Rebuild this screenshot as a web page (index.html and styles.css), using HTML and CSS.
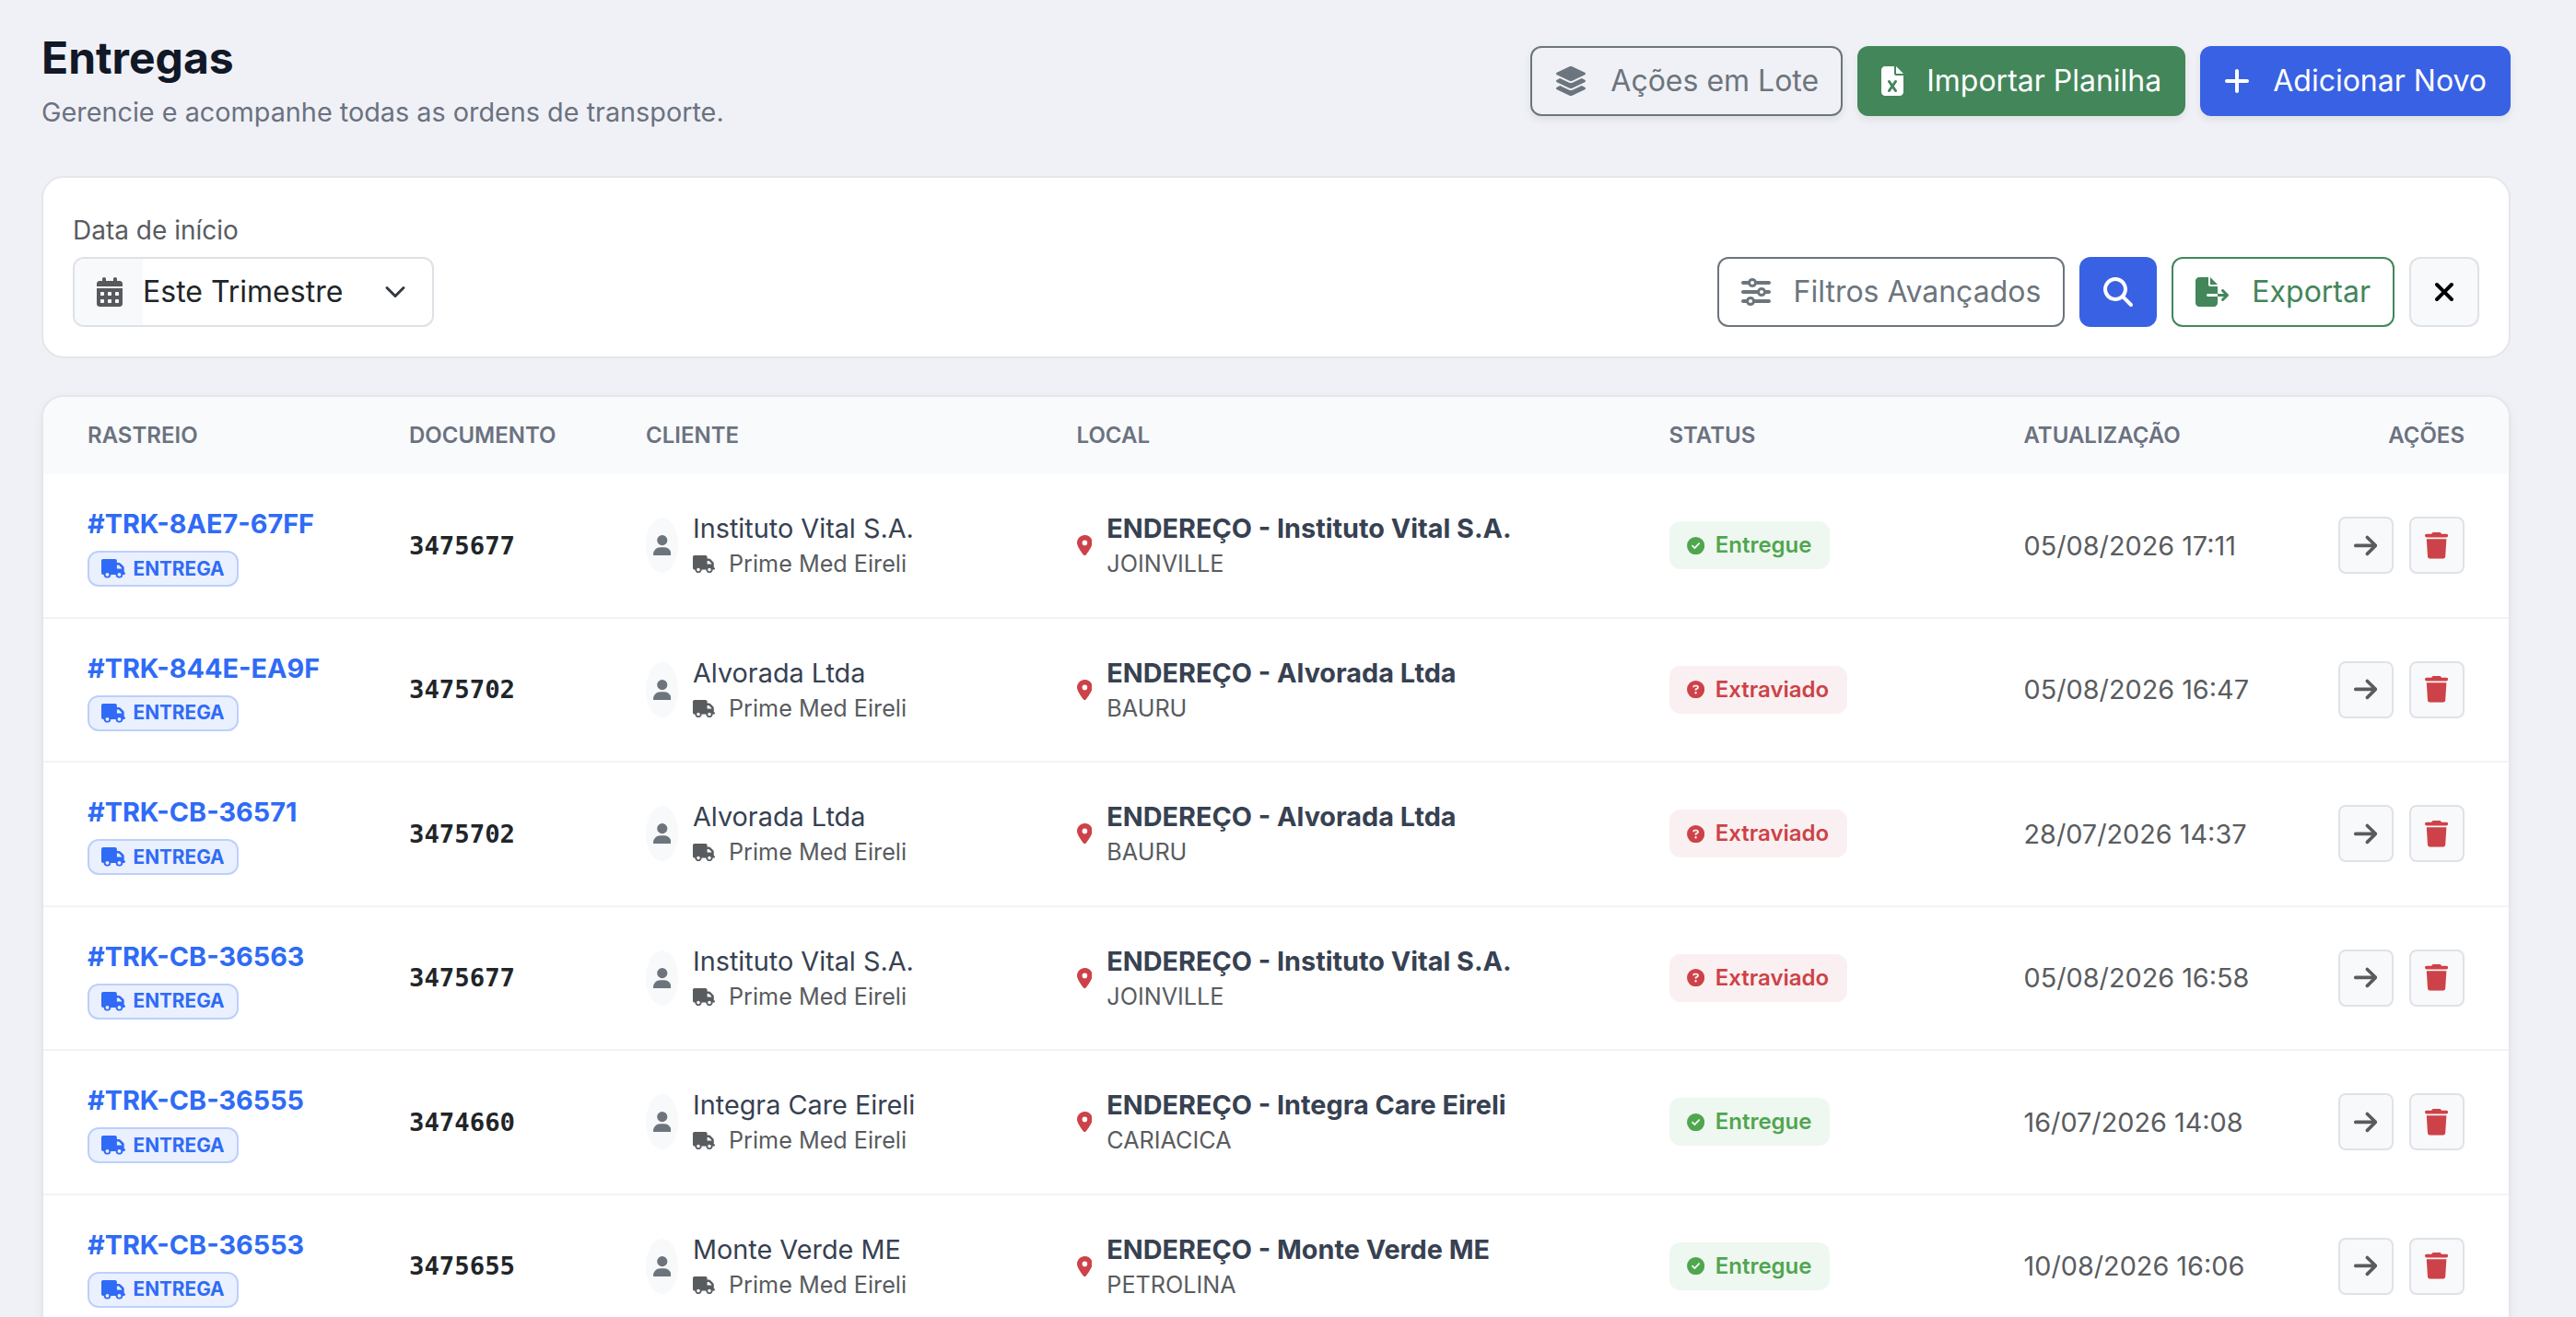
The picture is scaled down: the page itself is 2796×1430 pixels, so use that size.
FILE: index.html
```html
<!DOCTYPE html>
<html lang="pt-BR">
<head>
<meta charset="utf-8">
<title>Entregas</title>
<link rel="stylesheet" href="styles.css">
</head>
<body>
<svg class="sprite" width="0" height="0" aria-hidden="true">
<symbol id="i-layers" viewBox="0 0 576 512"><path d="M264.5 5.2c14.9-6.9 32.1-6.9 47 0l218.6 101c8.5 3.9 13.9 12.4 13.9 21.8s-5.4 17.9-13.9 21.8l-218.6 101c-14.9 6.9-32.1 6.9-47 0L45.9 149.8C37.4 145.8 32 137.3 32 128s5.4-17.9 13.9-21.8L264.5 5.2zM476.9 209.6l53.2 24.6c8.5 3.9 13.9 12.4 13.9 21.8s-5.4 17.9-13.9 21.8l-218.6 101c-14.9 6.9-32.1 6.9-47 0L45.9 277.8C37.4 273.8 32 265.3 32 256s5.4-17.9 13.9-21.8l53.2-24.6 152 70.2c23.4 10.8 50.4 10.8 73.8 0l152-70.2zm-152 198.2l152-70.2 53.2 24.6c8.5 3.9 13.9 12.4 13.9 21.8s-5.4 17.9-13.9 21.8l-218.6 101c-14.9 6.9-32.1 6.9-47 0L45.9 405.8C37.4 401.8 32 393.3 32 384s5.4-17.9 13.9-21.8l53.2-24.6 152 70.2c23.4 10.8 50.4 10.8 73.8 0z"/></symbol>
<symbol id="i-excel" viewBox="0 0 384 512"><path d="M64 0C28.7 0 0 28.7 0 64V448c0 35.3 28.7 64 64 64H320c35.3 0 64-28.7 64-64V160H256c-17.7 0-32-14.3-32-32V0H64zM256 0V128H384L256 0zM155.7 250.2L192 302.1l36.3-51.9c7.6-10.9 22.6-13.5 33.4-5.9s13.5 22.6 5.9 33.4L221.3 344l46.4 66.2c7.6 10.9 5 25.8-5.9 33.4s-25.8 5-33.4-5.9L192 385.8l-36.3 51.9c-7.6 10.9-22.6 13.5-33.4 5.9s-13.5-22.6-5.9-33.4L162.7 344l-46.4-66.2c-7.6-10.9-5-25.8 5.9-33.4s25.8-5 33.4 5.9z"/></symbol>
<symbol id="i-plus" viewBox="0 0 448 512"><path d="M256 80c0-17.7-14.3-32-32-32s-32 14.3-32 32V224H48c-17.7 0-32 14.3-32 32s14.3 32 32 32H192V432c0 17.7 14.3 32 32 32s32-14.3 32-32V288H400c17.7 0 32-14.3 32-32s-14.3-32-32-32H256V80z"/></symbol>
<symbol id="i-calendar" viewBox="0 0 448 512"><path d="M128 0c17.7 0 32 14.3 32 32V64H288V32c0-17.7 14.3-32 32-32s32 14.3 32 32V64h48c26.5 0 48 21.5 48 48v48H0V112C0 85.5 21.5 64 48 64H96V32c0-17.7 14.3-32 32-32zM0 192H448V464c0 26.5-21.5 48-48 48H48c-26.5 0-48-21.5-48-48V192zm64 80v32c0 8.8 7.2 16 16 16h32c8.8 0 16-7.2 16-16V272c0-8.8-7.2-16-16-16H80c-8.8 0-16 7.2-16 16zm128 0v32c0 8.8 7.2 16 16 16h32c8.8 0 16-7.2 16-16V272c0-8.8-7.2-16-16-16H208c-8.8 0-16 7.2-16 16zm144-16c-8.8 0-16 7.2-16 16v32c0 8.8 7.2 16 16 16h32c8.8 0 16-7.2 16-16V272c0-8.8-7.2-16-16-16H336zM64 400v32c0 8.8 7.2 16 16 16h32c8.8 0 16-7.2 16-16V400c0-8.8-7.2-16-16-16H80c-8.8 0-16 7.2-16 16zm144-16c-8.8 0-16 7.2-16 16v32c0 8.8 7.2 16 16 16h32c8.8 0 16-7.2 16-16V400c0-8.8-7.2-16-16-16H208zm112 16v32c0 8.8 7.2 16 16 16h32c8.8 0 16-7.2 16-16V400c0-8.8-7.2-16-16-16H336c-8.8 0-16 7.2-16 16z"/></symbol>
<symbol id="i-chevron" viewBox="0 0 16 16"><path fill="none" stroke="#343a40" stroke-linecap="round" stroke-linejoin="round" stroke-width="2" d="m2 5 6 6 6-6"/></symbol>
<symbol id="i-sliders" viewBox="0 0 512 512"><path d="M0 416c0 17.7 14.3 32 32 32l54.7 0c12.3 28.3 40.5 48 73.3 48s61-19.7 73.3-48L480 448c17.7 0 32-14.3 32-32s-14.3-32-32-32l-246.7 0c-12.3-28.3-40.5-48-73.3-48s-61 19.7-73.3 48L32 384c-17.7 0-32 14.3-32 32zm128 0a32 32 0 1 1 64 0 32 32 0 1 1 -64 0zM320 256a32 32 0 1 1 64 0 32 32 0 1 1 -64 0zm32-80c-32.8 0-61 19.7-73.3 48L32 224c-17.7 0-32 14.3-32 32s14.3 32 32 32l246.7 0c12.3 28.3 40.5 48 73.3 48s61-19.7 73.3-48l54.7 0c17.7 0 32-14.3 32-32s-14.3-32-32-32l-54.7 0c-12.3-28.3-40.5-48-73.3-48zM192 128a32 32 0 1 1 0-64 32 32 0 1 1 0 64zm73.3-64C253 35.7 224.8 16 192 16s-61 19.7-73.3 48L32 64C14.3 64 0 78.3 0 96s14.3 32 32 32l86.7 0c12.3 28.3 40.5 48 73.3 48s61-19.7 73.3-48L480 128c17.7 0 32-14.3 32-32s-14.3-32-32-32L265.3 64z"/></symbol>
<symbol id="i-search" viewBox="0 0 512 512"><path d="M416 208c0 45.9-14.9 88.3-40 122.7L502.6 457.4c12.5 12.5 12.5 32.8 0 45.3s-32.8 12.5-45.3 0L330.7 376c-34.4 25.2-76.8 40-122.7 40C93.1 416 0 322.9 0 208S93.1 0 208 0S416 93.1 416 208zM208 352a144 144 0 1 0 0-288 144 144 0 1 0 0 288z"/></symbol>
<symbol id="i-export" viewBox="0 0 576 512"><path d="M0 64C0 28.7 28.7 0 64 0H224V128c0 17.7 14.3 32 32 32H384V288H216c-13.3 0-24 10.7-24 24s10.7 24 24 24H384V448c0 35.3-28.7 64-64 64H64c-35.3 0-64-28.7-64-64V64zM384 336V288H494.1l-39-39c-9.4-9.4-9.4-24.6 0-33.9s24.6-9.4 33.9 0l80 80c9.4 9.4 9.4 24.6 0 33.9l-80 80c-9.4 9.4-24.6 9.4-33.9 0s-9.4-24.6 0-33.9l39-39H384zm0-208H256V0L384 128z"/></symbol>
<symbol id="i-xmark" viewBox="0 0 384 512"><path d="M342.6 150.6c12.5-12.5 12.5-32.8 0-45.3s-32.8-12.5-45.3 0L192 210.7 86.6 105.4c-12.5-12.5-32.8-12.5-45.3 0s-12.5 32.8 0 45.3L146.7 256 41.4 361.4c-12.5 12.5-12.5 32.8 0 45.3s32.8 12.5 45.3 0L192 301.3 297.4 406.6c12.5 12.5 32.8 12.5 45.3 0s12.5-32.8 0-45.3L237.3 256 342.6 150.6z"/></symbol>
<symbol id="i-truck" viewBox="0 0 640 512"><path d="M48 0C21.5 0 0 21.5 0 48V368c0 26.5 21.5 48 48 48H64c0 53 43 96 96 96s96-43 96-96H384c0 53 43 96 96 96s96-43 96-96h32c17.7 0 32-14.3 32-32s-14.3-32-32-32V288 256 237.3c0-17-6.7-33.3-18.7-45.3L512 114.7c-12-12-28.3-18.7-45.3-18.7H416V48c0-26.5-21.5-48-48-48H48zM416 160h50.7L544 237.3V256H416V160zM112 416a48 48 0 1 1 96 0 48 48 0 1 1 -96 0zm368-48a48 48 0 1 1 0 96 48 48 0 1 1 0-96z"/></symbol>
<symbol id="i-user" viewBox="0 0 448 512"><path d="M224 256A128 128 0 1 0 224 0a128 128 0 1 0 0 256zm-45.7 48C79.8 304 0 383.8 0 482.3C0 498.7 13.3 512 29.7 512H418.3c16.4 0 29.7-13.3 29.7-29.7C448 383.8 368.2 304 269.7 304H178.3z"/></symbol>
<symbol id="i-pin" viewBox="0 0 384 512"><path d="M215.7 499.2C267 435 384 279.4 384 192C384 86 298 0 192 0S0 86 0 192c0 87.4 117 243 168.3 307.2c12.3 15.3 35.1 15.3 47.4 0zM192 128a64 64 0 1 1 0 128 64 64 0 1 1 0-128z"/></symbol>
<symbol id="i-check" viewBox="0 0 512 512"><path d="M256 512A256 256 0 1 0 256 0a256 256 0 1 0 0 512zM369 209L241 337c-9.4 9.4-24.6 9.4-33.9 0l-64-64c-9.4-9.4-9.4-24.6 0-33.9s24.6-9.4 33.9 0l47 47L335 175c9.4-9.4 24.6-9.4 33.9 0s9.4 24.6 0 33.9z"/></symbol>
<symbol id="i-question" viewBox="0 0 512 512"><path d="M256 512A256 256 0 1 0 256 0a256 256 0 1 0 0 512zM169.8 165.3c7.9-22.3 29.1-37.3 52.8-37.3h58.3c34.9 0 63.1 28.3 63.1 63.1c0 22.6-12.1 43.5-31.7 54.8L280 264.4c-.2 13-10.9 23.6-24 23.6c-13.3 0-24-10.7-24-24V250.5c0-8.6 4.6-16.5 12.1-20.8l44.3-25.4c4.7-2.7 7.6-7.7 7.6-13.1c0-8.4-6.8-15.1-15.1-15.1H222.6c-3.4 0-6.4 2.1-7.5 5.3l-.4 1.2c-4.4 12.5-18.2 19-30.6 14.6s-19-18.2-14.6-30.6l.4-1.2zM224 352a32 32 0 1 1 64 0 32 32 0 1 1 -64 0z"/></symbol>
<symbol id="i-arrow" viewBox="0 0 448 512"><path d="M438.6 278.6c12.5-12.5 12.5-32.8 0-45.3l-160-160c-12.5-12.5-32.8-12.5-45.3 0s-12.5 32.8 0 45.3L338.8 224 32 224c-17.7 0-32 14.3-32 32s14.3 32 32 32l306.7 0L233.4 393.4c-12.5 12.5-12.5 32.8 0 45.3s32.8 12.5 45.3 0l160-160z"/></symbol>
<symbol id="i-trash" viewBox="0 0 448 512"><path d="M135.2 17.7L128 32H32C14.3 32 0 46.3 0 64S14.3 96 32 96H416c17.7 0 32-14.3 32-32s-14.3-32-32-32H320l-7.2-14.3C307.4 6.8 296.3 0 284.2 0H163.8c-12.1 0-23.2 6.8-28.6 17.7zM416 128H32L53.2 467c1.6 25.3 22.6 45 47.9 45H346.9c25.3 0 46.3-19.7 47.9-45L416 128z"/></symbol>
</svg>
<main class="page">
<header class="page-head">
<div>
<h1 class="title">Entregas</h1>
<p class="subtitle">Gerencie e acompanhe todas as ordens de transporte.</p>
</div>
<div class="actions">
<button class="btn btn-outline raised"><svg class="w36"><use href="#i-layers"/></svg><span>Ações em Lote</span></button>
<button class="btn btn-green raised"><svg class="w24"><use href="#i-excel"/></svg><span>Importar Planilha</span></button>
<button class="btn btn-blue raised"><svg class="w28"><use href="#i-plus"/></svg><span>Adicionar Novo</span></button>
</div>
</header>
<section class="filters">
<div class="field">
<label class="label">Data de início</label>
<div class="select"><span class="select-icon"><svg class="w28"><use href="#i-calendar"/></svg></span><span class="select-value">Este Trimestre</span><svg class="chevron"><use href="#i-chevron"/></svg></div>
</div>
<div class="actions">
<button class="btn btn-outline"><svg class="w32"><use href="#i-sliders"/></svg><span>Filtros Avançados</span></button>
<button class="btn btn-blue"><svg class="w32"><use href="#i-search"/></svg></button>
<button class="btn btn-outline-green"><svg class="w36"><use href="#i-export"/></svg><span>Exportar</span></button>
<button class="btn btn-light"><svg class="w24"><use href="#i-xmark"/></svg></button>
</div>
</section>
<section class="table">
<div class="row thead"><div>RASTREIO</div><div>DOCUMENTO</div><div>CLIENTE</div><div>LOCAL</div><div>STATUS</div><div>ATUALIZAÇÃO</div><div class="right">AÇÕES</div></div>

<div class="row">
<div class="track"><a class="code">#TRK-8AE7-67FF</a><span class="tag"><svg><use href="#i-truck"/></svg>ENTREGA</span></div>
<div class="doc">3475677</div>
<div class="client"><span class="avatar"><svg><use href="#i-user"/></svg></span><div class="stack"><span class="name">Instituto Vital S.A.</span><span class="sub"><svg><use href="#i-truck"/></svg>Prime Med Eireli</span></div></div>
<div class="place"><svg><use href="#i-pin"/></svg><div class="stack"><b class="name">ENDEREÇO - Instituto Vital S.A.</b><span class="sub">JOINVILLE</span></div></div>
<div><span class="status ok"><svg><use href="#i-check"/></svg>Entregue</span></div>
<div class="date">05/08/2026 17:11</div>
<div class="tools"><button class="tool"><svg><use href="#i-arrow"/></svg></button><button class="tool danger"><svg><use href="#i-trash"/></svg></button></div>
</div>

<div class="row">
<div class="track"><a class="code">#TRK-844E-EA9F</a><span class="tag"><svg><use href="#i-truck"/></svg>ENTREGA</span></div>
<div class="doc">3475702</div>
<div class="client"><span class="avatar"><svg><use href="#i-user"/></svg></span><div class="stack"><span class="name">Alvorada Ltda</span><span class="sub"><svg><use href="#i-truck"/></svg>Prime Med Eireli</span></div></div>
<div class="place"><svg><use href="#i-pin"/></svg><div class="stack"><b class="name">ENDEREÇO - Alvorada Ltda</b><span class="sub">BAURU</span></div></div>
<div><span class="status lost"><svg><use href="#i-question"/></svg>Extraviado</span></div>
<div class="date">05/08/2026 16:47</div>
<div class="tools"><button class="tool"><svg><use href="#i-arrow"/></svg></button><button class="tool danger"><svg><use href="#i-trash"/></svg></button></div>
</div>

<div class="row">
<div class="track"><a class="code">#TRK-CB-36571</a><span class="tag"><svg><use href="#i-truck"/></svg>ENTREGA</span></div>
<div class="doc">3475702</div>
<div class="client"><span class="avatar"><svg><use href="#i-user"/></svg></span><div class="stack"><span class="name">Alvorada Ltda</span><span class="sub"><svg><use href="#i-truck"/></svg>Prime Med Eireli</span></div></div>
<div class="place"><svg><use href="#i-pin"/></svg><div class="stack"><b class="name">ENDEREÇO - Alvorada Ltda</b><span class="sub">BAURU</span></div></div>
<div><span class="status lost"><svg><use href="#i-question"/></svg>Extraviado</span></div>
<div class="date">28/07/2026 14:37</div>
<div class="tools"><button class="tool"><svg><use href="#i-arrow"/></svg></button><button class="tool danger"><svg><use href="#i-trash"/></svg></button></div>
</div>

<div class="row">
<div class="track"><a class="code">#TRK-CB-36563</a><span class="tag"><svg><use href="#i-truck"/></svg>ENTREGA</span></div>
<div class="doc">3475677</div>
<div class="client"><span class="avatar"><svg><use href="#i-user"/></svg></span><div class="stack"><span class="name">Instituto Vital S.A.</span><span class="sub"><svg><use href="#i-truck"/></svg>Prime Med Eireli</span></div></div>
<div class="place"><svg><use href="#i-pin"/></svg><div class="stack"><b class="name">ENDEREÇO - Instituto Vital S.A.</b><span class="sub">JOINVILLE</span></div></div>
<div><span class="status lost"><svg><use href="#i-question"/></svg>Extraviado</span></div>
<div class="date">05/08/2026 16:58</div>
<div class="tools"><button class="tool"><svg><use href="#i-arrow"/></svg></button><button class="tool danger"><svg><use href="#i-trash"/></svg></button></div>
</div>

<div class="row">
<div class="track"><a class="code">#TRK-CB-36555</a><span class="tag"><svg><use href="#i-truck"/></svg>ENTREGA</span></div>
<div class="doc">3474660</div>
<div class="client"><span class="avatar"><svg><use href="#i-user"/></svg></span><div class="stack"><span class="name">Integra Care Eireli</span><span class="sub"><svg><use href="#i-truck"/></svg>Prime Med Eireli</span></div></div>
<div class="place"><svg><use href="#i-pin"/></svg><div class="stack"><b class="name">ENDEREÇO - Integra Care Eireli</b><span class="sub">CARIACICA</span></div></div>
<div><span class="status ok"><svg><use href="#i-check"/></svg>Entregue</span></div>
<div class="date">16/07/2026 14:08</div>
<div class="tools"><button class="tool"><svg><use href="#i-arrow"/></svg></button><button class="tool danger"><svg><use href="#i-trash"/></svg></button></div>
</div>

<div class="row">
<div class="track"><a class="code">#TRK-CB-36553</a><span class="tag"><svg><use href="#i-truck"/></svg>ENTREGA</span></div>
<div class="doc">3475655</div>
<div class="client"><span class="avatar"><svg><use href="#i-user"/></svg></span><div class="stack"><span class="name">Monte Verde ME</span><span class="sub"><svg><use href="#i-truck"/></svg>Prime Med Eireli</span></div></div>
<div class="place"><svg><use href="#i-pin"/></svg><div class="stack"><b class="name">ENDEREÇO - Monte Verde ME</b><span class="sub">PETROLINA</span></div></div>
<div><span class="status ok"><svg><use href="#i-check"/></svg>Entregue</span></div>
<div class="date">10/08/2026 16:06</div>
<div class="tools"><button class="tool"><svg><use href="#i-arrow"/></svg></button><button class="tool danger"><svg><use href="#i-trash"/></svg></button></div>
</div>
</section>
</main>
</body>
</html>
```
FILE: styles.css
```css
* { box-sizing: border-box; }
html, body { height: 100%; }
body { margin: 0; overflow: hidden; background: #f0f1f6; font-family: Inter, "Liberation Sans", sans-serif; font-size: 28.8px; color: #212529; }
svg { fill: currentColor; display: block; flex: none; }
.sprite { position: absolute; }
.page { height: 1430px; overflow: hidden; padding: 32px 71px 0 45px; }
.page-head { display: flex; justify-content: space-between; align-items: flex-start; height: 159px; }
.title { margin: 0; font-size: 48px; line-height: 61px; font-weight: 700; color: #111827; }
.subtitle { margin: 7px 0 0; line-height: 43px; color: #6b7280; }
.actions { display: flex; gap: 16px; }
.page-head .actions { margin-top: 18px; }
.btn { display: flex; align-items: center; gap: 25px; height: 76px; padding: 0 24px; border: 2px solid transparent; border-radius: 12px; background: transparent; font: 400 32px/48px Inter, "Liberation Sans", sans-serif; white-space: nowrap; }
.btn svg { height: 32px; }
.w24 { width: 24px; } .w28 { width: 28px; } .w32 { width: 32px; } .w36 { width: 36px; }
.btn-outline { border-color: #6c757d; color: #6c757d; }
.btn-green { background: #43865a; color: #fff; }
.btn-blue { background: #3861e4; color: #fff; }
.btn-outline-green { border-color: #43865a; color: #43865a; }
.btn-light { background: #f8f9fb; border-color: #dfe2e6; color: #000; }
.raised { box-shadow: 0 4px 8px rgba(0, 0, 0, .075); }
.filters { display: flex; justify-content: space-between; align-items: flex-end; height: 198px; padding: 32px; border: 2px solid #e5e6ea; border-radius: 24px; background: #fff; }
.field { display: flex; flex-direction: column; gap: 8px; }
.label { font-size: 28px; line-height: 42px; color: #595c5f; }
.select { display: flex; align-items: center; width: 392px; height: 76px; border: 2px solid #dee2e6; border-radius: 12px; overflow: hidden; font-size: 32px; line-height: 48px; }
.select-icon { display: flex; align-items: center; width: 74px; height: 100%; padding-left: 24px; background: #f8f9fb; color: #58595c; }
.select-icon svg { height: 32px; }
.select-value { flex: 1; }
.chevron { width: 24px; height: 24px; margin-right: 28px; }
.table { margin-top: 40px; height: 1100px; border: 2px solid #e5e6ea; border-radius: 24px; overflow: hidden; background: #fff; box-shadow: 0 4px 12px rgba(0, 0, 0, .05); }
.row { display: grid; grid-template-columns: 349px 257px 467.5px 643px 385px 300px 1fr; align-items: center; height: 156.5px; border-bottom: 2px solid #f2f3f5; }
.row > div { padding-left: 48px; white-space: nowrap; }
.thead { height: 84px; border: 0; background: #f9fafc; color: #6b7280; font-size: 24px; font-weight: 600; line-height: 36px; }
.row > .right { text-align: right; padding: 0 48px 0 0; }
.track { display: flex; flex-direction: column; align-items: flex-start; gap: 8px; }
.code { font-weight: 700; line-height: 43px; color: #2f6bf6; }
.tag { display: flex; align-items: center; gap: 8.5px; height: 39px; padding: 0 13.5px 0 13px; border: 2px solid #bbd0fc; border-radius: 12px; background: #eaf0fe; color: #2f6bf6; font-size: 20.8px; font-weight: 700; line-height: 34px; }
.tag svg { width: 26px; height: 20.8px; }
.row > .doc { font: 700 27.3px/41px "DejaVu Sans Mono", monospace; }
.client, .place { display: flex; align-items: center; }
.avatar { display: flex; align-items: center; justify-content: center; width: 35px; height: 60px; margin-right: 16px; border-radius: 50%; background: #f8f9fb; color: #6c757d; }
.avatar svg { width: 19.6px; height: 22.4px; }
.stack { display: flex; flex-direction: column; }
.name { line-height: 41px; color: #374151; }
.sub { display: flex; align-items: center; gap: 15px; font-size: 25.2px; line-height: 37px; color: #595c5f; }
.sub svg { width: 24px; height: 19.2px; }
.place > svg { width: 16.8px; height: 22.4px; margin-right: 16px; color: #cd4248; }
.status { display: inline-flex; align-items: center; gap: 11.5px; height: 52px; padding: 0 20px 0 19.5px; border-radius: 12px; font-size: 24px; font-weight: 600; line-height: 36px; vertical-align: middle; }
.status svg { width: 19.2px; height: 19.2px; }
.ok { background: #eff7f1; color: #4fa64f; }
.lost { background: #faf0f1; color: #cd4248; }
.date { line-height: 43px; color: #595c5f; }
.row > .tools { display: flex; justify-content: flex-end; gap: 17px; padding: 0 48px 0 0; }
.tool { display: flex; align-items: center; justify-content: center; width: 60px; height: 62px; padding: 0; border: 2px solid #dfe2e6; border-radius: 8px; background: #f8f9fb; color: #595b5e; }
.tool svg { width: 25.2px; height: 28.8px; }
.tool.danger { color: #cd4248; }
```
